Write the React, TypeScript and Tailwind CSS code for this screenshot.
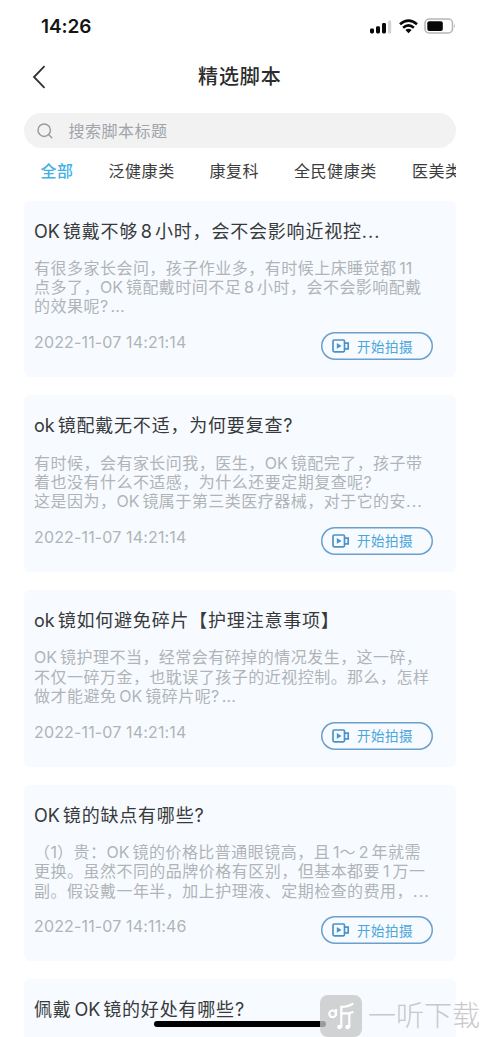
import { Fragment } from "react";

type Script = { title: string; lines: string[]; time: string };

const tabs = [
  { name: "全部", width: "w-[68px]" },
  { name: "泛健康类", width: "w-[101px]" },
  { name: "康复科", width: "w-[84.5px]" },
  { name: "全民健康类", width: "w-[118px]" },
  { name: "医美类", width: "w-[60px]" },
];

const scripts: Script[] = [
  {
    title: "OK镜戴不够8小时，会不会影响近视控…",
    lines: ["有很多家长会问，孩子作业多，有时候上床睡觉都11", "点多了，OK镜配戴时间不足8小时，会不会影响配戴", "的效果呢？..."],
    time: "2022-11-07 14:21:14",
  },
  {
    title: "ok镜配戴无不适，为何要复查？",
    lines: ["有时候，会有家长问我，医生，OK镜配完了，孩子带", "着也没有什么不适感，为什么还要定期复查呢？", "这是因为，OK镜属于第三类医疗器械，对于它的安…"],
    time: "2022-11-07 14:21:14",
  },
  {
    title: "ok镜如何避免碎片【护理注意事项】",
    lines: ["OK镜护理不当，经常会有碎掉的情况发生，这一碎，", "不仅一碎万金，也耽误了孩子的近视控制。那么，怎样", "做才能避免OK镜碎片呢？..."],
    time: "2022-11-07 14:21:14",
  },
  {
    title: "OK镜的缺点有哪些？",
    lines: ["（1）贵：OK镜的价格比普通眼镜高，且1～2年就需", "更换。虽然不同的品牌价格有区别，但基本都要1万一", "副。假设戴一年半，加上护理液、定期检查的费用，…"],
    time: "2022-11-07 14:11:46",
  },
  { title: "佩戴OK镜的好处有哪些？", lines: [], time: "" },
];

/* Adds a little air between Latin runs and the Chinese text around them. */
function Mixed({ text }: { text: string }) {
  const parts = text.split(/([A-Za-z0-9]+|\.\.\.|？|…)/).filter(Boolean);
  return (
    <>
      {parts.map((p, i) => {
        if (p === "？") return <span key={i} className="inline-block w-[0.66em] font-['Inter'] tracking-normal">?</span>;
        if (p === "…") return <span key={i} className="tracking-[1px]">...</span>;
        if (p === "...") return <span key={i} className="tracking-[0.2px]">{p}</span>;
        if (!/^[A-Za-z0-9]/.test(p)) return <Fragment key={i}>{p}</Fragment>;
        const before = i > 0 && !/[，（：]$/.test(parts[i - 1]);
        const after = i < parts.length - 1 && !/^[）～]/.test(parts[i + 1]);
        return (
          <span key={i} className={`tracking-normal ${before ? "ml-[2.8px]" : ""} ${after ? "mr-[3px]" : ""}`}>
            {p}
          </span>
        );
      })}
    </>
  );
}

function ShootButton() {
  return (
    <button className="mt-[0.6px] flex h-[28px] w-[112px] items-center rounded-full pl-[11px] text-[#4ba6d9] shadow-[inset_0_0_0_1.5px_#6b9fcc]">
      <svg width="18" height="14" viewBox="0 0 18 14" fill="none" stroke="#4a93c8" strokeWidth="1.7">
        <rect x="1" y="1" width="11.5" height="11.8" rx="1.2" />
        <path d="M12.5 4.2h3.7v5.6h-3.7" />
        <path d="M4.8 4v5.8L9.6 6.9z" fill="#4a93c8" stroke="none" />
      </svg>
      <span className="ml-[7px] pt-px text-[13.5px] leading-[20px] tracking-[0.5px] whitespace-nowrap">开始拍摄</span>
    </button>
  );
}

function Card({ script }: { script: Script }) {
  return (
    <article className="h-[176.7px] shrink-0 rounded-[6px] bg-[#f7fbff] px-[10px] pt-[18px]">
      <h2 className="h-[26px] text-[18px] leading-[26px] tracking-[0.8px] whitespace-nowrap text-[#37393b]">
        <Mixed text={script.title} />
      </h2>
      <div className="mt-[14.2px] h-[58px] text-[16px] leading-[19.3px] tracking-[0.48px] text-[#b0b4b8]">
        {script.lines.map((l) => (
          <p key={l} className="whitespace-nowrap"><Mixed text={l} /></p>
        ))}
      </div>
      {script.time && (
        <div className="mt-[14.8px] flex justify-between pr-[13px]">
          <time className="pt-[0.7px] text-[16px] leading-[20px] tracking-[0.15px] whitespace-nowrap text-[#b0b4b8]">{script.time}</time>
          <ShootButton />
        </div>
      )}
    </article>
  );
}

export default function App() {
  return (
    <div className="relative flex h-[1037px] w-[480px] flex-col overflow-hidden bg-white font-['Inter','Noto_Sans_CJK_SC',sans-serif]">
      <div className="flex h-[52px] shrink-0 items-center justify-between pr-[24px] pl-[41px]">
        <span className="pt-[2px] text-[19px] leading-[24px] font-semibold tracking-[-0.1px] text-[#151515]">14:26</span>
        <div className="flex items-center">
          <svg width="22" height="16" viewBox="0 0 22 16" fill="#090909">
            <rect x="0" y="10.5" width="4" height="5" rx="1.4" />
            <rect x="6" y="8.3" width="4" height="7.2" rx="1.4" />
            <rect x="12" y="5" width="4" height="10.5" rx="1.4" />
            <rect x="18" y="2.5" width="3.2" height="13" rx="1.2" fill="#d2d2d2" />
          </svg>
          <svg className="ml-[7px]" width="19" height="15" viewBox="0 0 19 15" fill="none" stroke="#080808" strokeWidth="2.6">
            <path d="M1 5.2Q9.5-2.1 18 5.2" />
            <path d="M4.1 8.7Q9.5 3.9 14.9 8.7" />
            <path d="M6.4 11Q9.5 8.6 12.6 11L9.5 14.2z" fill="#080808" stroke="none" />
          </svg>
          <svg className="ml-[6px]" width="32" height="16" viewBox="0 0 32 16">
            <rect x="1" y="1" width="27.5" height="14" rx="4.2" fill="white" stroke="#b7b7b7" strokeWidth="1.6" />
            <rect x="3.3" y="3.2" width="15.5" height="9.7" rx="2" fill="#080808" />
            <path d="M30 5.8q1.7 2.2 0 4.4z" fill="#aaa" />
          </svg>
        </div>
      </div>
      <header className="flex h-[49px] shrink-0 items-center pl-[32px]">
        <svg width="14" height="24" viewBox="0 0 14 24" fill="none" stroke="#303030" strokeWidth="1.8">
          <path d="M12.5 1.2 2 12l10.5 10.8" />
        </svg>
        <h1 className="ml-[152px] pt-px text-[20px] leading-[28px] font-medium tracking-[0.9px] text-[#2c2c2c]">精选脚本</h1>
      </header>
      <div className="mx-[24px] mt-[12px] flex h-[35px] shrink-0 items-center rounded-full bg-[#f2f2f2] pl-[13px]">
        <svg width="16" height="16" viewBox="0 0 16 16" fill="none" stroke="#989ca3" strokeWidth="1.5">
          <circle cx="7.2" cy="7.2" r="6.2" />
          <path d="m11.8 11.8 3 3" strokeLinecap="round" />
        </svg>
        <span className="ml-[15.5px] text-[16px] leading-[24px] tracking-[0.5px] text-[#a0a4aa]">搜索脚本标题</span>
      </div>
      <nav className="mx-[24px] flex h-[45px] shrink-0 overflow-hidden pl-[16.4px]">
        {tabs.map((t, i) => (
          <span key={t.name} className={`${t.width} shrink-0 pt-[11px] text-[16px] leading-[24px] tracking-[0.6px] whitespace-nowrap ${i === 0 ? "font-medium text-[#43b0e4]" : "text-[#3c3c3c]"}`}>{t.name}</span>
        ))}
      </nav>
      <main className="mx-[24px] mt-[7.7px] flex flex-col gap-[18px]">
        {scripts.map((s) => <Card key={s.title} script={s} />)}
      </main>
      <div className="absolute top-[1021px] left-[154px] h-[6px] w-[172px] rounded-full bg-black" />
      <div className="absolute top-[995px] left-[320px] flex h-[42px] items-center">
        <svg width="42" height="42" viewBox="0 0 42 42" fill="none">
          <rect width="42" height="42" rx="8" fill="#c5c6c8" fillOpacity="0.78" />
          <g stroke="white" strokeWidth="2.2" strokeLinecap="round">
            <circle cx="12.6" cy="18.8" r="3.3" />
            <path d="M16 14.8v5M32.5 8.8q-4.5 3-11.2 3v20M21.5 18.2q6 .8 11-1M29.3 18.5v13.5" />
          </g>
          <circle cx="19.4" cy="32" r="2.2" fill="white" />
          <circle cx="27.5" cy="32" r="2.2" fill="white" />
        </svg>
        <span className="ml-[6px] text-[28px] leading-[40px] font-light whitespace-nowrap text-[#c8c9cb]">一听下载</span>
      </div>
    </div>
  );
}
